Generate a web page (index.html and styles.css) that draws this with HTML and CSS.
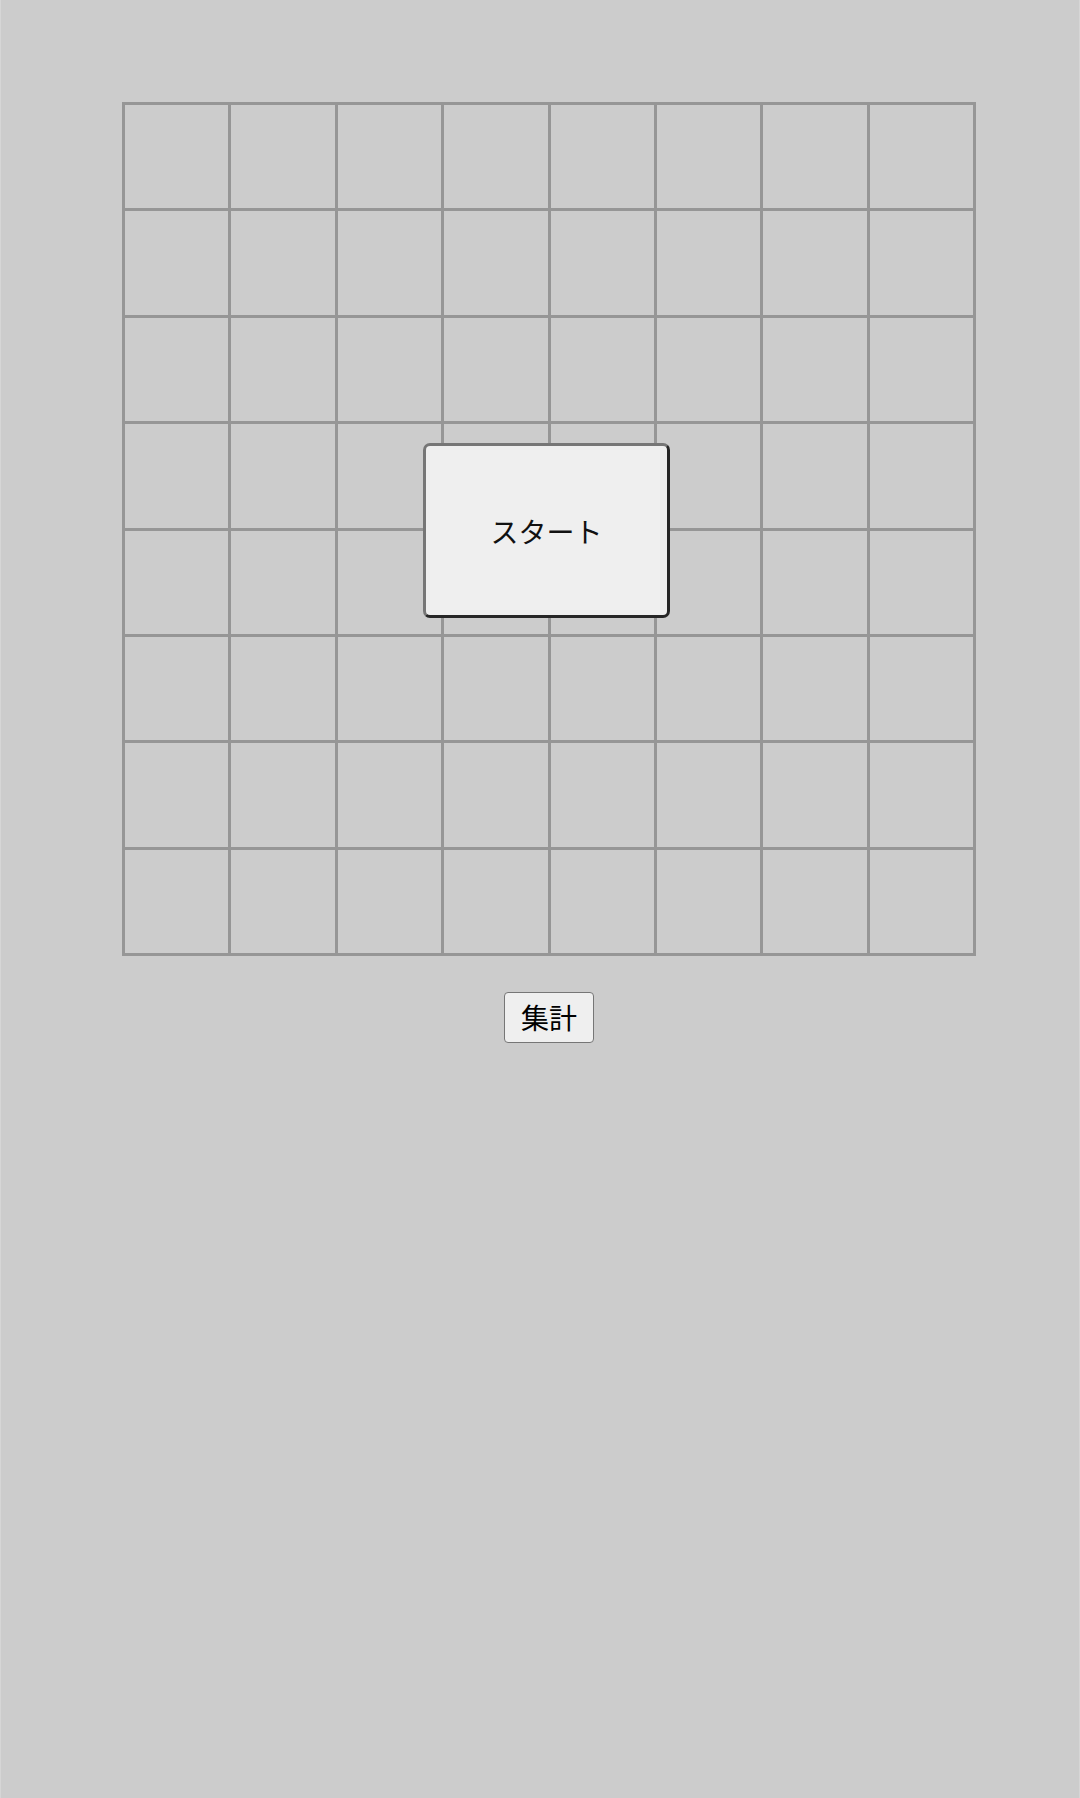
FILE: index.html
```html
<!DOCTYPE html>
<html lang="ja">
<head>
<meta charset="utf-8">
<title>Board</title>
<link rel="stylesheet" href="styles.css">
</head>
<body>
<main class="page">
  <div class="board-wrap">
    <div class="board">
      <div class="cell"></div><div class="cell"></div><div class="cell"></div><div class="cell"></div><div class="cell"></div><div class="cell"></div><div class="cell"></div><div class="cell"></div>
      <div class="cell"></div><div class="cell"></div><div class="cell"></div><div class="cell"></div><div class="cell"></div><div class="cell"></div><div class="cell"></div><div class="cell"></div>
      <div class="cell"></div><div class="cell"></div><div class="cell"></div><div class="cell"></div><div class="cell"></div><div class="cell"></div><div class="cell"></div><div class="cell"></div>
      <div class="cell"></div><div class="cell"></div><div class="cell"></div><div class="cell"></div><div class="cell"></div><div class="cell"></div><div class="cell"></div><div class="cell"></div>
      <div class="cell"></div><div class="cell"></div><div class="cell"></div><div class="cell"></div><div class="cell"></div><div class="cell"></div><div class="cell"></div><div class="cell"></div>
      <div class="cell"></div><div class="cell"></div><div class="cell"></div><div class="cell"></div><div class="cell"></div><div class="cell"></div><div class="cell"></div><div class="cell"></div>
      <div class="cell"></div><div class="cell"></div><div class="cell"></div><div class="cell"></div><div class="cell"></div><div class="cell"></div><div class="cell"></div><div class="cell"></div>
      <div class="cell"></div><div class="cell"></div><div class="cell"></div><div class="cell"></div><div class="cell"></div><div class="cell"></div><div class="cell"></div><div class="cell"></div>
    </div>
    <button class="start-btn" type="button">スタート</button>
  </div>
  <div class="actions">
    <button class="total-btn" type="button">集計</button>
  </div>
</main>
</body>
</html>
```

FILE: styles.css
```css
html {
  background: #d6d6d6;
  margin: 0;
  padding: 0;
}
body {
  margin: 0 1px;
  background: #cccccc;
  min-height: 1798px;
  font-family: "Noto Sans CJK JP", "Noto Sans", sans-serif;
}
.page {
  padding: 102px 0 0 121px;
  width: 854px;
}
.board-wrap {
  position: relative;
  width: 854px;
  height: 854px;
}
.board {
  box-sizing: border-box;
  width: 854px;
  height: 854px;
  display: grid;
  grid-template-columns: repeat(8, 1fr);
  grid-template-rows: repeat(8, 1fr);
  gap: 3px;
  padding: 3px;
  background: #969696;
}
.cell {
  background: #cccccc;
}
.start-btn {
  position: absolute;
  left: 301px;
  top: 341px;
  width: 247px;
  height: 175px;
  box-sizing: border-box;
  border: 3px solid;
  border-color: #767676 #262626 #262626 #767676;
  border-radius: 7px;
  background: #efefef;
  color: #111;
  font-family: "Noto Sans CJK JP", sans-serif;
  font-size: 28px;
  padding: 0;
  line-height: 1;
}
.actions {
  display: flex;
  justify-content: center;
  padding-top: 36px;
}
.total-btn {
  box-sizing: border-box;
  border: 1px solid #767676;
  border-radius: 4px;
  background: #efefef;
  color: #000;
  font-family: "Noto Sans CJK JP", sans-serif;
  font-size: 28px;
  line-height: 41px;
  padding: 4px 16px;
  height: 51px;
}
```
